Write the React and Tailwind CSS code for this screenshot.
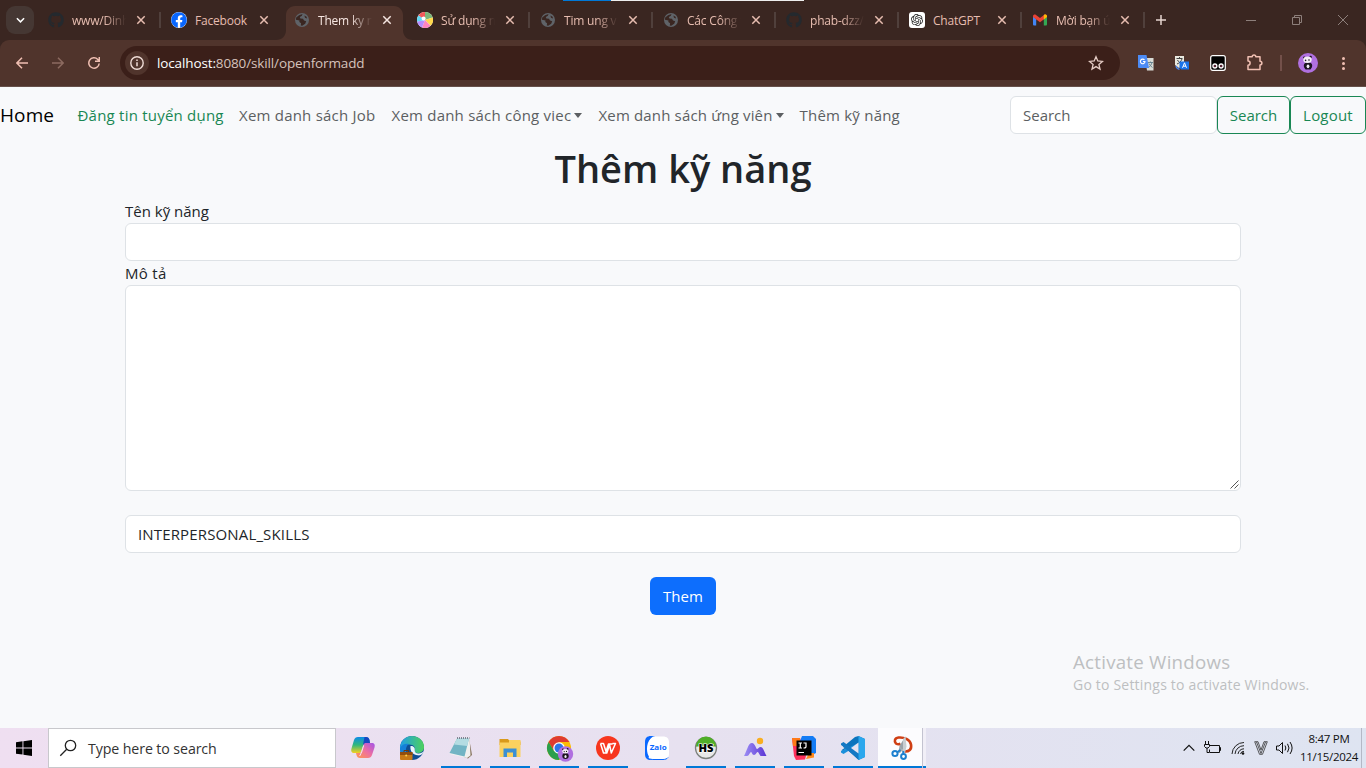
import React from "react";
import { FaGithub, FaFacebook } from "react-icons/fa";
import { SiOpenai } from "react-icons/si";

function Globe() {
  return (
    <svg viewBox="0 0 16 16" className="size-4">
      <circle cx="8" cy="8" r="7" fill="#5f6368" />
      <path d="M2.200 5.500 5 3.200 8.500 2l-.6 1.800L5.800 5l.6 1.600 2.600.2 1 1.800 2.200.6-1 2.600-3 2-1.400-.2.3-2.400-1.800-1.200.2-1.600-3.600-.6zM10.400 3.600l2.200 1.200.4 1.600-2-.6z" fill="#3a2621" />
    </svg>
  );
}

function Wheel() {
  return (
    <svg viewBox="0 0 16 16" className="size-4">
      <circle cx="8" cy="8" r="8" fill="#fff" />
      <path d="M8 8 1.500 3.400A8 8 0 0 1 8 0z" fill="#f25a5a" />
      <path d="M8 8V0a8 8 0 0 1 7.600 5.500z" fill="#7cb87a" />
      <path d="m8 8 7.600-2.500A8 8 0 0 1 13.500 13.800z" fill="#ffd84d" />
      <path d="m8 8 5.500 5.800A8 8 0 0 1 5 15.400z" fill="#ff85c0" />
      <path d="m8 8-3 7.400A8 8 0 0 1 .2 9.500z" fill="#b68cff" />
      <path d="M8 8 .2 9.500A8 8 0 0 1 1.500 3.400z" fill="#62d8f5" />
      <circle cx="6.600" cy="6.500" r="2" fill="#fff" />
    </svg>
  );
}

function Gmail() {
  return (
    <svg viewBox="0 0 16 16" className="size-4">
      <path d="M1 4.500 4.200 7v6.500H2a1 1 0 0 1-1-1z" fill="#4285f4" />
      <path d="M15 4.500 11.800 7v6.500H14a1 1 0 0 0 1-1z" fill="#34a853" />
      <path d="M1 4.200C1 2.600 2.800 2 4 2.900L8 6l4-3.100c1.200-.9 3-.3 3 1.300v.8L8 10.300 1 5z" fill="#ea4335" />
      <path d="M11.800 3.100c1.300-1 3.200-.4 3.200 1.100V5l-3.200 2.400z" fill="#fbbc04" />
    </svg>
  );
}

function ChatGPT() {
  return (
    <span className="flex size-4 items-center justify-center rounded-[3px] bg-white">
      <SiOpenai className="size-3 text-[#222]" />
    </span>
  );
}

const Git = () => <FaGithub className="size-4 text-[#24292e]" />;
const Fb = () => (
  <span className="flex size-4 rounded-full bg-white">
    <FaFacebook className="size-4 text-[#0866ff]" />
  </span>
);

const tabs = [
  { icon: Git, text: "www/Dinh", sep: true },
  { icon: Fb, text: "Facebook", short: true },
  { icon: Globe, text: "Them ky n", active: true },
  { icon: Wheel, text: "Sử dụng n", sep: true },
  { icon: Globe, text: "Tim ung v", sep: true },
  { icon: Globe, text: "Các Công t", sep: true },
  { icon: Git, text: "phab-dzz/", sep: true },
  { icon: ChatGPT, text: "ChatGPT", sep: true, short: true },
  { icon: Gmail, text: "Mời bạn ứ", sep: true },
];

function Tab({ icon: Icon, text, sep, active, short }) {
  return (
    <div className="relative flex h-10 w-[123px] shrink-0 items-center pl-[11px]">
      {active && (
        <svg viewBox="0 0 137 34" className="absolute -left-[7px] top-[6px] h-[34px] w-[137px]">
          <path d="M0 34c6 0 10-4 10-10V9c0-5 4-9 9-9h99c5 0 9 4 9 9v15c0 6 4 10 10 10z" fill="#50342c" />
        </svg>
      )}
      <div className="relative size-4 shrink-0"><Icon /></div>
      <div
        className={
          "relative ml-2 mt-[2px] w-[54px] overflow-hidden whitespace-nowrap text-[12px] leading-4 tracking-[-0.2px] " +
          (short ? "" : "[mask-image:linear-gradient(to_right,black_60%,transparent_100%)] ") +
          (active ? "text-[#f6e6e1]" : "text-[#e7bdb0]")
        }
      >
        {text}
      </div>
      <svg viewBox="0 0 10 10" className="relative ml-[10px] size-[10px] shrink-0">
        <path d="m1.300 1.300 7.400 7.400m0-7.400-7.400 7.400" stroke={active ? "#f6e6e1" : "#e7bdb0"} strokeWidth="1.500" />
      </svg>
      {sep && <div className="absolute -right-px top-3 h-4 w-[2px] bg-[#50403c]" />}
    </div>
  );
}

function TabStrip() {
  return (
    <div className="relative flex h-10 items-center bg-[#3a2621]">
      <div className="absolute left-[563px] top-0 flex h-px w-[241px] bg-[#eee]">
        <div className="h-px w-12 bg-[#0078d7]" />
      </div>
      <div className="ml-[6px] mr-[3px] flex size-7 items-center justify-center rounded-[9px] bg-[#453733]">
        <svg viewBox="0 0 10 6" className="h-[6px] w-[9px]">
          <path d="m1 1 4 4 4-4" fill="none" stroke="#fff" strokeWidth="1.700" />
        </svg>
      </div>
      {tabs.map((t, i) => <Tab key={i} {...t} />)}
      <svg viewBox="0 0 10 10" className="ml-[12px] size-[10px]">
        <path d="M5 0v10M0 5h10" stroke="#e6d5d0" strokeWidth="1.500" />
      </svg>
      <div className="ml-auto mr-[18px] flex items-center gap-[36px] text-[#8d7f7b]">
        <svg viewBox="0 0 10 10" className="size-[10px]"><path d="M0 5.500h10" stroke="currentColor" /></svg>
        <svg viewBox="0 0 10 10" className="size-[10px]"><path d="M.5 2.500h7v7h-7zM2.500 2.500v-2h7v7h-2" fill="none" stroke="currentColor" /></svg>
        <svg viewBox="0 0 10 10" className="size-[10px]"><path d="m0 0 10 10M10 0 0 10" stroke="currentColor" /></svg>
      </div>
    </div>
  );
}

function Panda({ className }) {
  return (
    <svg viewBox="0 0 20 20" className={className}>
      <circle cx="10" cy="10" r="10" fill="#b070e0" />
      <ellipse cx="10" cy="12.800" rx="4.200" ry="3.600" fill="#1c1420" />
      <circle cx="6.300" cy="4.600" r="1.200" fill="#1c1420" />
      <circle cx="12.600" cy="4" r="1.200" fill="#1c1420" />
      <ellipse cx="9.500" cy="6.800" rx="4.200" ry="3.200" fill="#f4eef6" />
      <circle cx="7.600" cy="7.400" r=".8" fill="#1c1420" />
      <circle cx="11" cy="7" r=".8" fill="#1c1420" />
      <ellipse cx="10" cy="13.300" rx="1.400" ry="1.900" fill="#f4eef6" />
      <circle cx="8" cy="15.500" r="1" fill="#1c1420" />
      <circle cx="12" cy="15.500" r="1" fill="#1c1420" />
    </svg>
  );
}

function Toolbar() {
  return (
    <div className="bg-[#3a2621]">
      <div className="flex h-[47px] items-center rounded-t-[9px] border-b border-[#66504a] bg-[#50342c]">
        <svg viewBox="0 0 12 12" className="ml-4 size-3"><path d="M12 6H1.500M6 .8.9 6 6 11.200" fill="none" stroke="#f0bfb2" strokeWidth="1.500" /></svg>
        <svg viewBox="0 0 12 12" className="ml-6 size-3"><path d="M0 6h10.500M6 .8 11.100 6 6 11.200" fill="none" stroke="#8c6a60" strokeWidth="1.500" /></svg>
        <svg viewBox="0 0 12 12" className="ml-6 size-3"><path d="M11.200 6.500A5.200 5.200 0 1 1 9.800 2.400L11 3.700M11.300 0v4.300H7" fill="none" stroke="#f0bfb2" strokeWidth="1.500" /></svg>
        <div className="ml-5 flex h-[34px] w-[1000px] items-center rounded-full bg-[#3b1f19] pl-[5px]">
          <div className="flex size-6 items-center justify-center rounded-full bg-[#50342c]">
            <svg viewBox="0 0 14 14" className="size-[14px]">
              <circle cx="7" cy="7" r="6.200" fill="none" stroke="#efdcd6" strokeWidth="1.400" />
              <path d="M7 6.300v4M7 3.500v1.500" stroke="#efdcd6" strokeWidth="1.500" />
            </svg>
          </div>
          <div className="ml-2 text-[13.500px] leading-5 tracking-[-0.130px] text-[#d6c2bc]"><span className="text-[#fff]">localhost:</span>8080/skill/openformadd</div>
          <svg viewBox="0 0 16 16" className="ml-auto mr-4 size-4">
            <path d="m8 1.700 1.800 4.300 4.700.4-3.600 3.100 1.100 4.600L8 11.600 4 14.100l1.100-4.600L1.500 6.400 6.200 6z" fill="none" stroke="#e6cdc6" strokeWidth="1.300" />
          </svg>
        </div>
        <svg viewBox="0 0 16 16" className="ml-[18px] size-4">
          <path d="M7 3h8.500v12.500H9z" fill="#d9dcd6" />
          <path d="M10 7.500h5M12.500 6.500v1M14 7.500c-.4 2-2 4-3.500 5M11 8.500c.8 1.800 2 3 3.500 4" stroke="#607d8b" fill="none" strokeWidth=".9" />
          <path d="M0 0h8.500l2.500 13H1a1 1 0 0 1-1-1z" fill="#4c8bf5" />
          <path d="M6.500 5A2.300 2.300 0 1 0 7 6.500H5" fill="none" stroke="#fff" strokeWidth="1.100" />
        </svg>
        <svg viewBox="0 0 16 16" className="ml-5 size-4">
          <path d="M1 1h9v9l-5 3-4-3z" fill="#e9e9e0" />
          <path d="M2.500 3.500h6M5.500 2v1.500M8 4C7 6.500 5.500 8 3 9M3.500 5c1 2 2.500 3 4.500 3.500" stroke="#444" fill="none" />
          <path d="M5.500 6.500H15v8H7l-1.500-2z" fill="#1a73e8" />
          <path d="m8.500 12.800 2-5 2 5M9.200 11.200h2.600" stroke="#fff" fill="none" />
          <path d="M2 11c.5 2 1.500 3 3.500 3.300" stroke="#4c8bf5" fill="none" strokeWidth="1.300" />
        </svg>
        <svg viewBox="0 0 16 16" className="ml-5 size-4">
          <rect x=".7" y=".7" width="14.600" height="14.600" rx="2" fill="#000" stroke="#fff" strokeWidth="1.200" />
          <circle cx="4.900" cy="11" r="2" fill="#523" stroke="#fff" strokeWidth="1.300" />
          <circle cx="11.100" cy="11" r="2" fill="#523" stroke="#fff" strokeWidth="1.300" />
        </svg>
        <svg viewBox="0 0 18 18" className="ml-5 size-[18px]">
          <path d="M2 2.800h4.200a1.800 1.800 0 0 1 3.600 0H14V7.200a1.900 1.900 0 0 1 0 3.800v4.500H2v-4.300a2.100 2.100 0 0 0 0-4.200z" fill="none" stroke="#f0bfb2" strokeWidth="1.500" strokeLinejoin="round" />
        </svg>
        <div className="ml-4 h-4 w-[2px] bg-[#73504a]" />
        <Panda className="ml-4 size-5" />
        <div className="ml-6 flex flex-col gap-[2px]">
          <i className="size-[3px] rounded-full bg-[#f0bfb2]" />
          <i className="size-[3px] rounded-full bg-[#f0bfb2]" />
          <i className="size-[3px] rounded-full bg-[#f0bfb2]" />
        </div>
      </div>
    </div>
  );
}

const Caret = () => <span className="ml-[3px] inline-block border-x-[4.500px] border-t-[5px] border-x-transparent border-t-current align-[3px]" />;

function Navbar() {
  return (
    <nav className="flex h-14 items-center whitespace-nowrap text-[15px] tracking-[0.220px] text-[#5c5f62]">
      <a className="w-[77.500px] text-[19px] tracking-[0.100px] text-black">Home</a>
      <a className="w-[161.500px] text-[#198754]">Đăng tin tuyển dụng</a>
      <a className="w-[152.500px]">Xem danh sách Job</a>
      <a className="w-[207px]">Xem danh sách công viec<Caret /></a>
      <a className="w-[201px] tracking-[0.160px]">Xem danh sách ứng viên<Caret /></a>
      <a>Thêm kỹ năng</a>
      <div className="ml-auto flex tracking-normal">
        <div className="flex h-[38px] w-[207px] items-center rounded-[6px] border border-[#dee2e6] bg-white pl-3">Search</div>
        <button className="h-[38px] w-[73px] rounded-[6px] border border-[#198754] text-[#198754]">Search</button>
        <button className="h-[38px] w-[76px] rounded-[6px] border border-[#198754] tracking-[0.200px] text-[#198754]">Logout</button>
      </div>
    </nav>
  );
}

function Form() {
  return (
    <main className="mx-auto flex w-[1116px] flex-col text-[15px] text-[#212529]">
      <h1 className="mt-[1px] text-center text-[38px] font-semibold leading-[48px]">Thêm kỹ năng</h1>
      <label className="mt-[7px] leading-6">Tên kỹ năng</label>
      <div className="h-[38px] rounded-[6px] border border-[#dee2e6] bg-white" />
      <label className="leading-6 tracking-[0.300px]">Mô tả</label>
      <div className="flex h-[206px] items-end justify-end rounded-[6px] border border-[#dee2e6] bg-white p-[1px]">
        <svg viewBox="0 0 9 9" className="size-[9px]"><path d="M.5 8.500l8-8M4.500 8.500l4-4" stroke="#555" strokeWidth="1" /></svg>
      </div>
      <div className="mt-6 flex h-[38px] items-center rounded-[6px] border border-[#dee2e6] bg-white pl-3 tracking-[0.150px]">INTERPERSONAL_SKILLS</div>
      <button className="mx-auto mt-6 h-[38px] w-[66px] rounded-[6px] bg-[#0d6efd] text-white">Them</button>
    </main>
  );
}

const apps = [
  {
    art: (
      <>
        <defs>
          <linearGradient id="c1" x1="0" y1="0" x2="0" y2="1"><stop stopColor="#0c8be8" /><stop offset=".5" stopColor="#30b87c" /><stop offset="1" stopColor="#f5d020" /></linearGradient>
          <linearGradient id="c2" x1="1" y1="0" x2="0" y2="1"><stop stopColor="#a254e8" /><stop offset=".5" stopColor="#ee6fa0" /><stop offset="1" stopColor="#ff9a4c" /></linearGradient>
        </defs>
        <path d="M7 1h8c2 0 3 1 3.500 3L19 7h-4c-2 0-2.500 1-3 3l-1.500 4.500c-.5 2-1 2.500-3 2.500H3C0 17 0 14.500.5 12.500L3 4c.7-2 2-3 4-3z" fill="url(#c1)" />
        <path d="M13.500 1H15c2 0 3 1 3.500 3L19 7h-4l-3 2z" fill="#1747c0" />
        <path d="M17 22H9c-2 0-3-1-3.500-3L5 17h3c2 0 2.500-1 3-3l1.500-4.500c.5-2 1-2.500 3-2.500H21c3 0 3 2.500 2.500 4.500L21 19c-.7 2-2 3-4 3z" fill="url(#c2)" />
        <path d="m12.700 9.500-2 6.500-2 4" stroke="#f2e6f0" strokeWidth="1" fill="none" />
      </>
    ),
  },
  {
    art: (
      <>
        <defs><linearGradient id="e1"><stop stopColor="#1f9de8" /><stop offset="1" stopColor="#4ed25a" /></linearGradient></defs>
        <circle cx="12" cy="12" r="12" fill="#0f4f94" />
        <path d="M0 11C1 4 6 0 12 0c7 0 12 5 12 11 0 4-3 6-6.500 6-2 0-3.500-1-3-2.500 1.500-3-1-6-5-6S2 11 0 15z" fill="url(#e1)" />
        <path d="M0 12c2-4 6-5 9-4-3 2-4 6-2 10H1c-1-2-1-4-1-6z" fill="#1580d8" />
        <path d="M10.500 10c2.500-.5 4.800 1.500 4.200 4-.4 2 1.500 3.700 4 3.500 2-.1 4-1 5.200-2.200-1 3-3.200 4.500-6.200 4-4-.6-8-3.300-7.200-9.300z" fill="#e9f4fa" />
        <rect x="0" y="16" width="12.500" height="8" rx="1" fill="#c77a16" />
        <path d="M0 16h12.500v3H0z" fill="#8f4d0d" /><path d="M4 16v-1.500h4.500V16" fill="none" stroke="#6b380c" /><circle cx="6.200" cy="19.500" r="1" fill="#ffd24a" />
      </>
    ),
  },
  {
    run: true,
    art: (
      <>
        <path d="m20 2 3 17-4 3.500L15 21z" fill="#85715c" />
        <path d="M7.500 2 20.500 1.500l1 18L18 22 .5 18z" fill="#f0f0ee" />
        <path d="M8 2.500h12l-4.500 18L.5 17z" fill="#72b4c4" />
        <path d="M8 2.500h12L18.200 10 5 8.500z" fill="#b4dce2" />
        <path d="M8 2h12.500" stroke="#667" strokeDasharray="1 1" strokeWidth="1.300" />
      </>
    ),
  },
  {
    run: true,
    art: (
      <>
        <path d="M1.500 3H10l2 2.500h10.500V9h-21z" fill="#d99a1b" />
        <path d="M11 4h11.500v3H11z" fill="#fbd15f" />
        <path d="M1.500 6.500h21V21h-21z" fill="#fbd15f" />
        <path d="M5.500 12.500h13V21H15v-4.500H9V21H5.500z" fill="#3b8fd4" />
      </>
    ),
  },
  {
    run: true,
    art: (
      <>
        <circle cx="12" cy="12" r="12" fill="#fbbc05" />
        <path d="M1.600 6A12 12 0 0 1 22.400 6H12L7 15z" fill="#df3b30" />
        <path d="M1.600 6A12 12 0 0 0 12 24l5-9H7z" fill="#2b9f4c" />
        <circle cx="12" cy="12" r="5.800" fill="#fff" /><circle cx="12" cy="12" r="4.500" fill="#2f74e8" />
        <circle cx="18.500" cy="18" r="7.700" fill="#b070e0" />
        <ellipse cx="18.500" cy="20" rx="3.200" ry="3" fill="#1c1420" />
        <circle cx="16" cy="13.300" r=".9" fill="#1c1420" /><circle cx="20.600" cy="13" r=".9" fill="#1c1420" />
        <ellipse cx="18.300" cy="15.300" rx="3" ry="2.200" fill="#f4eef6" />
        <circle cx="17.200" cy="15.600" r=".6" fill="#1c1420" /><circle cx="19.500" cy="15.400" r=".6" fill="#1c1420" /><ellipse cx="18.500" cy="20.500" rx="1.100" ry="1.500" fill="#f4eef6" />
      </>
    ),
  },
  {
    run: true,
    art: (
      <>
        <circle cx="12" cy="12" r="12" fill="#f7361e" />
        <path d="M4.500 7.500h3l2.500 8L12.500 8h4M4.500 7.500l3 9.500h3.300L13.600 9l1.700 8L19.500 7.500h-3" fill="none" stroke="#fff" strokeWidth="1.500" strokeLinejoin="round" />
      </>
    ),
  },
  {
    art: (
      <>
        <path d="M6 0h4L5 4C2 9 3 15 5 18l4 6H6c-4 0-6-2-6-6V6c0-4 2-6 6-6z" fill="#0a68ff" />
        <path d="M8 .5h10c4 0 6 2 6 6v11c0 4-2 6-6 6H8c-2 0-3.500-.3-5-1.200 1-.8 1.300-1.600.5-2.600C1 15 1 5 8 .5z" fill="#fff" />
        <path d="M3 22.300c2 1 4 1.200 6 1.200h9c2.500 0 4-.7 5-2" fill="none" stroke="#0a68ff" />
        <text x="13.200" y="14" textAnchor="middle" fontSize="7.500" fontWeight="700" fill="#0a68ff" textLength="17" lengthAdjust="spacingAndGlyphs">Zalo</text>
      </>
    ),
  },
  {
    run: true,
    art: (
      <>
        <circle cx="12" cy="12" r="10.500" fill="#e8e8e8" stroke="#7b7f7b" strokeWidth="1.300" />
        <path d="M2 10.500a10 10 0 0 1 20 0z" fill="#4fae28" />
        <text x="12" y="16" textAnchor="middle" fontSize="11" fontWeight="800" fill="#000" stroke="#fff" strokeWidth="1.200" paintOrder="stroke" textLength="15" lengthAdjust="spacingAndGlyphs">HS</text>
      </>
    ),
  },
  {
    run: true,
    art: (
      <>
        <defs><linearGradient id="m1" x2="1" y2="0"><stop stopColor="#9b8cf4" /><stop offset="1" stopColor="#5b35d4" /></linearGradient></defs>
        <circle cx="17" cy="5" r="3.200" fill="#f9ae20" />
        <path d="M1 20c3-5 4-13 8-13 3 0 4 6 5 6s2-2 3.500-2c3 0 4 6 6 9h-6c-1.500-2-2-4-3-4s-1.500 3-3.500 3-2-3-3-3-2 4-4 4z" fill="url(#m1)" />
      </>
    ),
  },
  {
    run: true,
    art: (
      <>
        <path d="M0 2h8l6 18-1 3.500-9 .5L2 20z" fill="#fe315d" />
        <path d="M0 2h8v8H1z" fill="#ff7a18" />
        <path d="M10 0h11l3 3v14l-6 3L8 5z" fill="#147cf5" />
        <path d="M17 17h5v4.500L14 23z" fill="#ff8a1c" />
        <rect x="4.500" y="4.500" width="15" height="15" fill="#000" />
        <path d="M6.500 7h3.500M8.300 7v5M6.500 12h3.500M11.500 7h2.500v3.700q0 1.300-2.500 1.300M6.500 16.500h5.500" stroke="#fff" strokeWidth="1.200" fill="none" />
      </>
    ),
  },
  {
    run: true,
    art: (
      <>
        <path d="m17.500 0 6.500 3v18l-6.500 3L5 12.500 2 15 0 14v-1.500L14 1z" fill="#0b74bd" />
        <path d="M17.500 7 6.500 15.500 2.500 18 0 16.500V15z" fill="#1b90db" />
        <path d="M0 7.500 2.500 6 17.500 17v6L0 9z" fill="#1479c4" />
        <path d="m17.500 0 6.500 3v18l-6.500 3z" fill="#2ba7ed" />
        <path d="M17.500 6.500v11L10 12z" fill="#e6e4f1" />
        <path d="M0 9.500 3.500 12 0 14.500z" fill="#e6e4f1" />
      </>
    ),
  },
  {
    run: true,
    active: true,
    art: (
      <>
        <path d="M14 15.500c5 .5 8-2 7-7C20 3.500 14 1 8.500 1.500 4.500 2 4 5.500 6 7.500c1.500 1 3 1 4.500.3" fill="none" stroke="#cf3f14" strokeWidth="2.600" />
        <path d="m10 9 5.500-8.500L14 12l-4 5-2-.5z" fill="#9aa3aa" />
        <path d="m13 3 2.500-2.500 1 10-1.500 6.500-2-.5z" fill="#c9ced2" />
        <path d="m8.500 9 6.500 8-2 .5z" fill="#aab1b7" />
        <circle cx="5" cy="17.500" r="2.600" fill="#fff" stroke="#1d80cf" strokeWidth="2" />
        <circle cx="13.500" cy="20.500" r="2.400" fill="#fff" stroke="#1d80cf" strokeWidth="2" />
        <path d="m7.500 16 3-2M13 18l.5-3" stroke="#1d80cf" strokeWidth="1.800" />
      </>
    ),
  },
];

function Taskbar() {
  return (
    <footer className="flex h-10 items-center bg-gradient-to-r from-[#efdff1] via-[#e7e1f0] to-[#dee4f1]">
      <div className="flex h-10 w-12 items-center justify-center">
        <svg viewBox="0 0 16 16" className="size-4"><path d="M0 2.200 6.500 1.300v6.200H0zM7.400 1.200 16 0v7.500H7.400zM0 8.400h6.500v6.200L0 13.700zM7.400 8.400H16V16l-8.600-1.200z" /></svg>
      </div>
      <div className="flex h-10 w-72 items-center border border-[#c8c8cc] bg-white text-[14.200px] text-[#333]">
        <svg viewBox="0 0 18 18" className="ml-[10px] size-[18px]"><circle cx="11.500" cy="6.500" r="5.200" fill="none" stroke="#222" strokeWidth="1.300" /><path d="M7.700 10.300 1.300 16.700" stroke="#222" strokeWidth="1.300" /></svg>
        <span className="ml-[11px] mt-[2px] tracking-[-0.100px]">Type here to search</span>
      </div>
      <div className="ml-[2px] flex h-10">
        {apps.map((a, i) => (
          <div key={i} className={"flex h-10 flex-col items-center " + (a.active ? "w-[44px] ml-[1px] bg-white/90" : "w-[49px]")}>
            <svg viewBox="0 0 24 24" className={"mt-2 size-6 shrink-0 overflow-visible " + (a.active ? "ml-1" : "")}>{a.art}</svg>
            {a.run && <div className={"mt-auto h-[2px] bg-[#0078d7] " + (a.active ? "w-full" : "w-10")} />}
          </div>
        ))}
        <div className="flex h-10 w-1 flex-col border-l border-[#c3c3d0] bg-[#f1eff7]"><div className="mt-auto h-[2px] bg-[#0078d7]" /></div>
      </div>
      <div className="ml-auto flex h-10 items-center text-[#111]">
        <svg viewBox="0 0 12 8" className="mr-[9px] h-2 w-3"><path d="m.7 6.700 5.300-5.300 5.300 5.300" fill="none" stroke="#111" strokeWidth="1.200" /></svg>
        <svg viewBox="0 0 17 14" className="mr-[10px] h-[14px] w-[17px]"><path d="M6 4.500h9.500v7H5.500V8.500M15.500 6.500h1v3h-1M1.500 0v3M4.500 0v3M.5 3.500h5v2l-1.500 1.500h-2L.5 5.500zM3 7v4.500h2" fill="none" stroke="#111" /></svg>
        <svg viewBox="0 0 14 14" className="mr-[9px] size-[14px]"><path d="M1 13A12 12 0 0 1 13 1.500M4 13a9 9 0 0 1 9-8.300M7 13a6 6 0 0 1 6-5.200M9.500 13a3.500 3.500 0 0 1 3.500-2.700" fill="none" stroke="#222" /><circle cx="12" cy="12.500" r="1.300" fill="#111" /></svg>
        <svg viewBox="0 0 14 14" className="mr-[8px] size-[14px]"><path d="M.7.7h3.300L7 9 10 .7h3.300L8.500 13.300h-3zM2.500 1 7 12.500 11.500 1" fill="none" stroke="#333" strokeWidth=".8" /></svg>
        <svg viewBox="0 0 17 14" className="mr-[7px] h-[14px] w-[17px]"><path d="M.5 5h2.500L6.500 1.500v11L3 9H.5zM9 4.500q1.700 2.500 0 5M11.500 2.800q3 4.200 0 8.400M14 1q4.200 6 0 12" fill="none" stroke="#111" /></svg>
        <div className="w-[58px] whitespace-nowrap text-center text-[11.500px] leading-[18px] tracking-[-0.300px]">
          <div>8:47 PM</div>
          <div>11/15/2024</div>
        </div>
        <div className="ml-[3px] h-10 w-[5px] border-l border-[#b4b8c6]" />
      </div>
    </footer>
  );
}

export default function App() {
  return (
    <div className="relative flex h-[768px] w-[1366px] flex-col overflow-hidden bg-[#f8f9fb] font-['Open_Sans','Noto_Sans',sans-serif]">
      <TabStrip />
      <Toolbar />
      <div className="flex-1">
        <Navbar />
        <Form />
      </div>
      <div className="absolute left-[1073px] top-[650px] whitespace-nowrap text-[#bdbfc1]">
        <div className="text-[18.700px] leading-6 tracking-[0.250px]">Activate Windows</div>
        <div className="text-[14px] leading-[22px] tracking-[0.200px]">Go to Settings to activate Windows.</div>
      </div>
      <Taskbar />
    </div>
  );
}
